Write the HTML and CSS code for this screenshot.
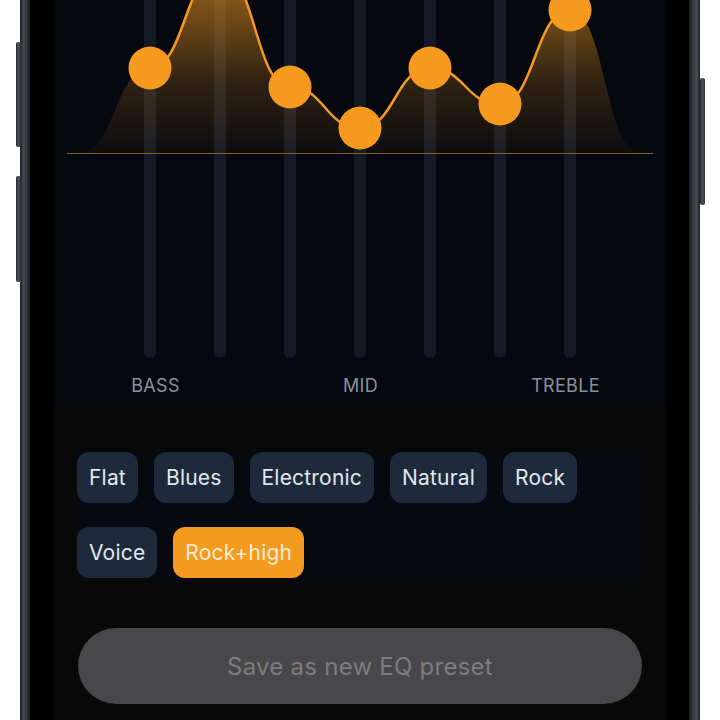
FILE: index.html
```html
<!DOCTYPE html>
<html lang="en">
<head>
<meta charset="utf-8">
<title>Equalizer</title>
<link rel="stylesheet" href="styles.css">
</head>
<body>
<div class="phone">
  <div class="side side-l1"></div>
  <div class="side side-l2"></div>
  <div class="side side-r"></div>
  <div class="edge edge-l"></div>
  <div class="bezel">
    <div class="screen">
      <section class="eq">
        <svg class="chart" viewBox="0 0 614 358" width="614" height="358">
          <defs>
            <linearGradient id="fillGrad" x1="0" y1="0" x2="0" y2="153" gradientUnits="userSpaceOnUse">
              <stop offset="0" stop-color="#f59a1f" stop-opacity="0.52"/>
              <stop offset="0.55" stop-color="#f59a1f" stop-opacity="0.17"/>
              <stop offset="1" stop-color="#f59a1f" stop-opacity="0.03"/>
            </linearGradient>
          </defs>
          <g class="tracks">
            <rect x="91" y="-20" width="12" height="378" rx="6"/>
            <rect x="161" y="-20" width="12" height="378" rx="6"/>
            <rect x="231" y="-20" width="12" height="378" rx="6"/>
            <rect x="301" y="-20" width="12" height="378" rx="6"/>
            <rect x="371" y="-20" width="12" height="378" rx="6"/>
            <rect x="441" y="-20" width="12" height="378" rx="6"/>
            <rect x="511" y="-20" width="12" height="378" rx="6"/>
          </g>
          <path class="area" fill="url(#fillGrad)" d="M27,153 C62,153 62,68 97,68 C132,68 132,-30 167,-30 C202,-30 202,87 237,87 C272,87 272,128 307,128 C342,128 342,68 377,68 C412,68 412,104 447,104 C482,104 482,10 517,10 C552,10 552,153 587,153 Z"/>
          <rect class="baseline" x="14" y="153" width="586" height="1"/>
          <path class="curve" d="M97,68 C132,68 132,-30 167,-30 C202,-30 202,87 237,87 C272,87 272,128 307,128 C342,128 342,68 377,68 C412,68 412,104 447,104 C482,104 482,10 517,10"/>
          <g class="knobs">
            <circle cx="97" cy="68" r="21.5"/>
            <circle cx="167" cy="-30" r="21.5"/>
            <circle cx="237" cy="87" r="21.5"/>
            <circle cx="307" cy="128" r="21.5"/>
            <circle cx="377" cy="68" r="21.5"/>
            <circle cx="447" cy="104" r="21.5"/>
            <circle cx="517" cy="10" r="21.5"/>
          </g>
        </svg>
        <div class="bands">
          <span>BASS</span>
          <span>MID</span>
          <span>TREBLE</span>
        </div>
      </section>
      <div class="presets">
        <div class="chip">Flat</div>
        <div class="chip">Blues</div>
        <div class="chip">Electronic</div>
        <div class="chip">Natural</div>
        <div class="chip">Rock</div>
        <div class="chip">Voice</div>
        <div class="chip active">Rock+high</div>
      </div>
      <div class="save">Save as new EQ preset</div>
    </div>
  </div>
  <div class="edge edge-r"></div>
</div>
</body>
</html>
```
FILE: styles.css
```css
* { box-sizing: border-box; }
html, body {
  margin: 0;
  height: 100%;
  background: #ffffff;
  overflow: hidden;
}
body {
  font-family: Inter, "Noto Sans", sans-serif;
}
.phone {
  position: relative;
  margin-left: 20px;
  width: 680px;
  height: 720px;
  display: flex;
}
.edge-l {
  width: 10px;
  background: linear-gradient(90deg, #1c1e22 0, #464a50 35%, #33363b 65%, #1a1c20 100%);
}
.edge-r {
  width: 11px;
  background: linear-gradient(90deg, #1a1c20 0, #34373c 35%, #4a4d53 70%, #1c1e22 100%);
}
.side {
  position: absolute;
  width: 5px;
  border-radius: 2px;
  background: linear-gradient(90deg, #24272c, #50545a 50%, #2a2d32);
}
.side-l1 { left: -4px; top: 42px; height: 105px; }
.side-l2 { left: -4px; top: 176px; height: 106px; }
.side-r { right: -5px; top: 78px; height: 127px; }
.bezel {
  flex: 1;
  background: #000;
  padding: 0 22px 0 23px;
}
.screen {
  width: 614px;
  height: 100%;
  background: #080808;
  display: flex;
  flex-direction: column;
}
.eq {
  height: 405px;
  background: #05080f;
  display: flex;
  flex-direction: column;
}
.chart {
  display: block;
  overflow: hidden;
}
.tracks rect { fill: #141a25; }
.baseline { fill: #86601f; }
.curve { fill: none; stroke: #f59a1f; stroke-width: 2.5; }
.knobs circle { fill: #f59a1f; }
.bands {
  flex: 1;
  display: grid;
  grid-template-columns: repeat(3, 205px);
  align-items: center;
  padding-top: 7px;
  color: #8c9199;
  font-size: 18px;
  letter-spacing: 0.3px;
  text-align: center;
}
.presets {
  margin: 47px 0 0 22px;
  width: 568px;
  padding: 0 2px 2px;
  background: #060910;
  display: flex;
  flex-wrap: wrap;
  gap: 24px 16px;
}
.chip {
  height: 51px;
  padding: 0 12px;
  border-radius: 12px;
  background: #1e2a3c;
  color: #e3e7ec;
  font-size: 21px;
  letter-spacing: 0.2px;
  display: flex;
  align-items: center;
}
.chip.active {
  background: #f49a1e;
  color: #fdebd3;
}
.save {
  margin: 48px 0 0 25px;
  width: 564px;
  height: 76px;
  border-radius: 38px;
  background: #48484a;
  color: #7d7d81;
  font-size: 24px;
  letter-spacing: 0.25px;
  display: flex;
  align-items: center;
  justify-content: center;
}
```
